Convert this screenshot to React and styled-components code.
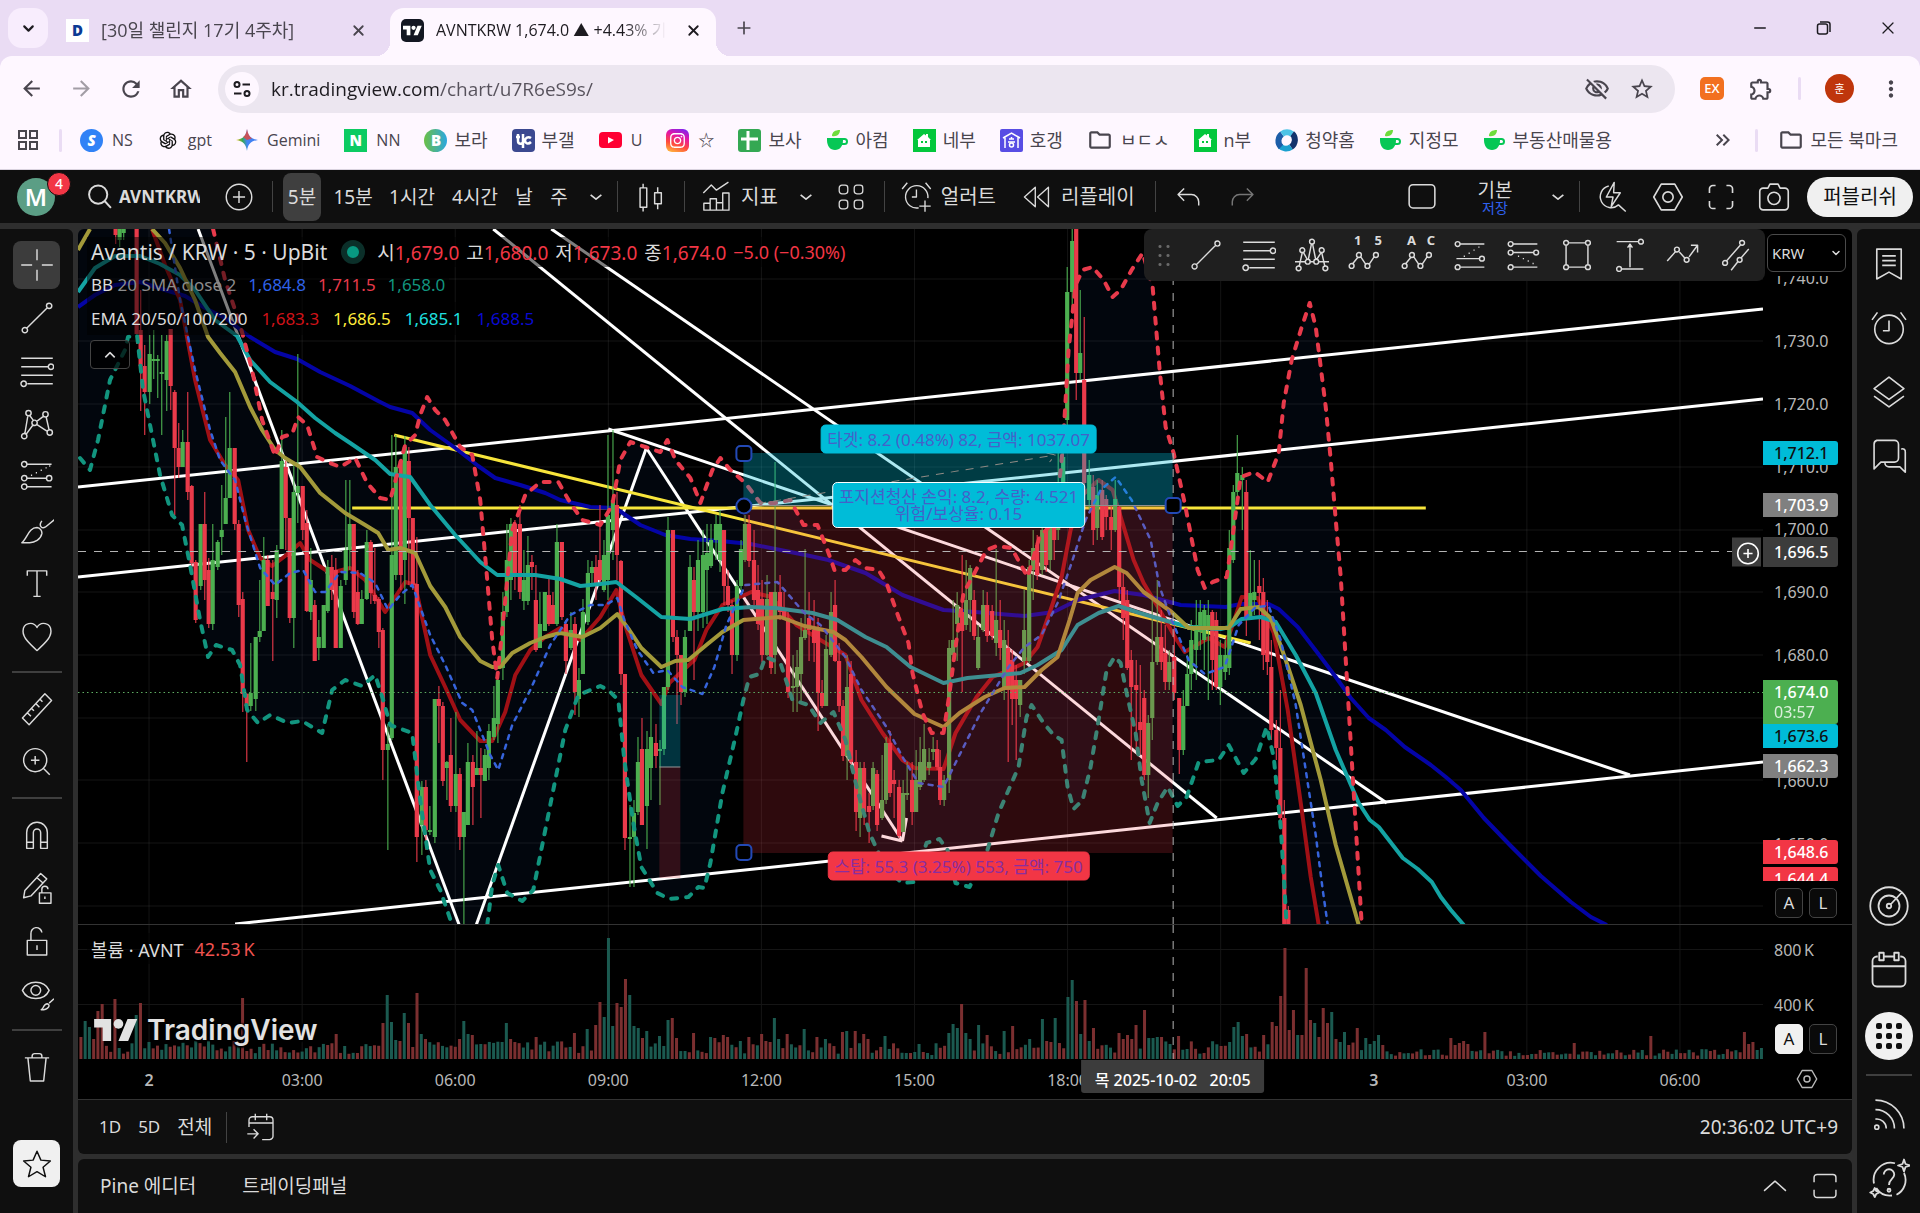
import React, { useState } from 'react';
import styled, { createGlobalStyle, css } from 'styled-components';
import {
  MdArrowBack,
  MdArrowForward,
  MdRefresh,
  MdOutlineHome,
  MdOutlineVisibilityOff,
  MdStarBorder,
  MdOutlineExtension,
  MdMoreVert,
  MdOutlineFolder,
  MdKeyboardDoubleArrowRight,
} from 'react-icons/md';
import { AiOutlineOpenAI } from 'react-icons/ai';
import { FaInstagram } from 'react-icons/fa';
import { ChevronDown, X, Plus, Minus } from 'lucide-react';

const GlobalStyle = createGlobalStyle`
  * { box-sizing: border-box; }
  body { margin: 0; background: #2e2e2e; }
  button, input, select { font: inherit; color: inherit; }
  button { border: 0; background: none; padding: 0; cursor: pointer; }
  a { color: inherit; text-decoration: none; }
`;

/* ---------- browser frame ---------- */

const Page = styled.div`
  min-height: 100vh;
  display: flex;
  flex-direction: column;
  font-family: 'Noto Sans', 'Noto Sans CJK KR', sans-serif;
`;

const BrowserFrame = styled.header`
  font-family: 'Open Sans', 'Noto Sans CJK KR', sans-serif;
  background: #eadcf4;
  color: #49454e;
`;

const TabStrip = styled.div`
  height: 56px;
  padding: 8px 20px 0 8px;
  display: flex;
`;

const TabSearch = styled.button`
  width: 40px;
  height: 40px;
  border-radius: 14px;
  background: #f8edfd;
  color: #1d1b20;
  display: grid;
  place-items: center;
`;

const Tab = styled.div`
  position: relative;
  width: ${(p) => (p.$active ? 326 : 342)}px;
  height: ${(p) => (p.$active ? 48 : 44)}px;
  padding: ${(p) => (p.$active ? '0 13px 4px 11px' : '0 23px 0 18px')};
  display: flex;
  align-items: center;
  gap: 12px;
  font-size: ${(p) => (p.$active ? 16 : 18)}px;
  line-height: 24px;
  border-radius: 14px 14px 0 0;
  ${(p) =>
    p.$active &&
    css`
      background: #fef7ff;
      color: #1d1b20;
      &::before,
      &::after {
        content: '';
        position: absolute;
        bottom: 0;
        width: 14px;
        height: 14px;
      }
      &::before {
        left: -14px;
        background: radial-gradient(circle at 0 0, transparent 14px, #fef7ff 14px);
      }
      &::after {
        right: -14px;
        background: radial-gradient(circle at 100% 0, transparent 14px, #fef7ff 14px);
      }
    `}
`;

const TabTitle = styled.span`
  flex: 1;
  overflow: hidden;
  white-space: nowrap;
  mask-image: linear-gradient(90deg, #000 80%, transparent 98%);
`;

const PlainButton = styled.button`
  display: grid;
  place-items: center;
  width: ${(p) => p.$w || 24}px;
  height: ${(p) => p.$h || 40}px;
`;

const WindowControls = styled.div`
  margin-left: auto;
  display: flex;
  gap: 40px;
  color: #1d1b20;
`;

const AddressRow = styled.div`
  height: 65px;
  padding: 0 20px 0 16px;
  display: flex;
  align-items: center;
  background: #fef7ff;
  border-radius: 12px 12px 0 0;
`;

const NavButtons = styled.div`
  display: flex;
  gap: 20px;
  margin-right: 22px;

  button:nth-child(2) {
    opacity: 0.5;
  }
`;

const Omnibox = styled.label`
  flex: 1;
  height: 48px;
  padding: 0 20px 0 7px;
  display: flex;
  align-items: center;
  gap: 12px;
  border-radius: 24px;
  background: #ece6f0;
`;

const SiteInfo = styled.span`
  width: 34px;
  height: 34px;
  border-radius: 50%;
  background: #fef7ff;
  display: grid;
  place-items: center;
`;

const UrlInput = styled.input`
  flex: 1;
  min-width: 0;
  border: 0;
  outline: 0;
  padding: 0;
  font-size: 19px;
  line-height: 28px;
  background: linear-gradient(90deg, #1d1b20 167px, #56515b 167px);
  background-clip: text;
  -webkit-text-fill-color: transparent;
`;

const BrowserActions = styled.div`
  display: flex;
  align-items: center;
  gap: 24px;
  margin-left: 25px;
`;

const ExBadge = styled.button`
  width: 24px;
  height: 23px;
  border-radius: 5px;
  background: #f2701f;
  color: #fff;
  font-size: 13px;
  font-weight: 600;
  line-height: 23px;
`;

const ProfileBadge = styled.button`
  width: 29px;
  height: 29px;
  border-radius: 50%;
  background: #bf360c;
  color: #fff;
  font-size: 11px;
  line-height: 29px;
`;

const SoftDivider = styled.i`
  width: 3px;
  height: 23px;
  border-radius: 2px;
  background: #eadcf4;
`;

const BookmarkBar = styled.nav`
  height: 49px;
  padding: 0 22px 10px 16px;
  display: flex;
  align-items: center;
  gap: 24px;
  background: #fef7ff;
  border-bottom: 1px solid #d9d2de;
  line-height: 24px;
  white-space: nowrap;
`;

const BookmarkLead = styled.div`
  display: flex;
  align-items: center;
  gap: 19px;
  margin-right: -6px;
`;

const Bookmark = styled.a`
  display: flex;
  align-items: center;
  gap: ${(p) => (p.$latin ? 9 : 7)}px;
  font-size: ${(p) => (p.$latin ? 16 : 18)}px;
`;

const BookmarkTail = styled.div`
  margin-left: auto;
  display: flex;
  align-items: center;
  gap: 20px;
`;

const Favicon = styled.span`
  width: 23px;
  height: 23px;
  display: grid;
  place-items: center;
  border-radius: ${(p) => p.$radius || 0};
  background: ${(p) => p.$bg || 'none'};
  color: ${(p) => p.$color || '#fff'};
  font-weight: 800;
  font-size: 15px;
  font-style: ${(p) => (p.$italic ? 'italic' : 'normal')};
  line-height: 23px;
`;

/* ---------- trading app ---------- */

const TopBar = styled.div`
  height: 53px;
  padding: 0 7px 0 17px;
  display: flex;
  align-items: center;
  background: #0f0f0f;
  color: #dbdbdb;
  font-size: 19px;
  line-height: 24px;
  white-space: nowrap;
`;

const Avatar = styled.button`
  position: relative;
  width: 38px;
  height: 38px;
  margin-right: 28px;
  border-radius: 50%;
  background: #5b9e85;
  color: #fff;
  font-size: 24px;
  font-weight: 600;
  line-height: 38px;
`;

const Notice = styled.span`
  position: absolute;
  top: -6px;
  right: -16px;
  width: 24px;
  height: 24px;
  border: 1px solid #0f0f0f;
  border-radius: 50%;
  background: #f23645;
  font-size: 14px;
  line-height: 22px;
  font-weight: 500;
`;

const SymbolButton = styled.button`
  display: flex;
  align-items: center;
  gap: 2px;
  width: 117px;
  margin-right: 22px;
  overflow: hidden;
  font-weight: 700;
  font-size: 17px;

  svg {
    flex-shrink: 0;
  }
`;

const IconButton = styled.button`
  width: 34px;
  height: 46px;
  display: grid;
  place-items: center;
  opacity: ${(p) => (p.$dim ? 0.5 : 1)};
`;

const LabelButton = styled.button`
  display: flex;
  align-items: center;
  gap: 8px;
  height: 46px;
  font-size: 20px;
`;

const BarDivider = styled.i`
  width: 1px;
  height: 31px;
  margin: 0 16px 0 ${(p) => (p.$wide ? 20 : 16)}px;
  background: #434343;
`;

const Intervals = styled.div`
  display: flex;
  align-items: center;
  gap: 9px;
  margin-left: -6px;
`;

const IntervalButton = styled.button`
  width: ${(p) => p.$w}px;
  height: 48px;
  border-radius: 8px;
  background: ${(p) => (p.$active ? '#3f3f3f' : 'none')};
`;

const Cluster = styled.div`
  display: flex;
  align-items: center;
  gap: ${(p) => p.$gap}px;
`;

const RightTools = styled(Cluster)`
  margin-left: auto;
`;

const LayoutName = styled.button`
  width: 52px;
  margin: 0 22px 0 31px;
  line-height: 22px;

  small {
    display: block;
    color: #2f62f0;
    font-size: 14px;
    line-height: 14px;
  }
`;

const PublishButton = styled.button`
  width: 106px;
  height: 40px;
  margin-left: 18px;
  border-radius: 20px;
  background: #f0f0f0;
  color: #0f0f0f;
  font-size: 20px;
`;

const Workspace = styled.div`
  flex: 1;
  display: grid;
  grid-template-columns: 73px minmax(0, 1fr) 63px;
  gap: 5px;
  padding-top: 6px;
`;

const SideBar = styled.aside`
  background: #0f0f0f;
  color: #dbdbdb;
  display: flex;
  flex-direction: column;
  align-items: center;
  padding: ${(p) => (p.$right ? '3px 0 2px' : '9px 0 26px')};
  border-radius: ${(p) => (p.$right ? '6px 0 0 0' : '0 6px 0 0')};
`;

const ToolButton = styled.button`
  width: 47px;
  height: ${(p) => p.$h || 53}px;
  display: grid;
  place-items: center;
`;

const ActiveTool = styled.span`
  width: 47px;
  height: 48px;
  display: grid;
  place-items: center;
  border-radius: 8px;
  background: #3c3c3c;
`;

const ToolDivider = styled.i`
  width: ${(p) => (p.$tight ? 46 : 50)}px;
  height: 2px;
  margin: ${(p) => (p.$tight ? '14px 0 7px' : '9px 0')};
  background: #3f3f3f;
`;

const FavoriteButton = styled.button`
  width: 47px;
  height: 47px;
  margin-top: auto;
  border-radius: 8px;
  background: #f0f0f0;
  color: #0f0f0f;
  display: grid;
  place-items: center;
`;

const AppsButton = styled.button`
  width: 48px;
  height: 48px;
  margin-top: 10px;
  border-radius: 50%;
  background: #f0f0f0;
  color: #0f0f0f;
  display: grid;
  place-items: center;
`;

const Spacer = styled.span`
  flex: 1;
`;

const Center = styled.main`
  display: flex;
  flex-direction: column;
  color: #dbdbdb;
`;

const ChartCard = styled.section`
  flex: 1;
  display: flex;
  flex-direction: column;
  background: #000;
  border-radius: 6px 6px 0 0;
  overflow: hidden;
`;

const Pane = styled.div`
  flex: ${(p) => (p.$fixed ? `0 0 ${p.$fixed}px` : '1')};
  display: grid;
  grid-template-columns: minmax(0, 1fr) 89px;
  ${(p) => p.$line && 'border-top: 1px solid #333;'}
`;

const Plot = styled.div`
  position: relative;
  min-height: 0;
`;

const PlotSvg = styled.svg`
  position: absolute;
  inset: 0;
  width: 100%;
  height: 100%;
`;

const Legend = styled.div`
  position: absolute;
  top: 8px;
  left: 9px;
  display: flex;
  flex-direction: column;
  align-items: flex-start;
  font-size: ${(p) => (p.$large ? 18 : 17)}px;
  white-space: nowrap;
`;

const LegendRow = styled.div`
  height: ${(p) => p.$h}px;
  padding: 0 4px;
  display: flex;
  align-items: center;
  gap: ${(p) => p.$gap || 12}px;
  background: rgba(0, 0, 0, 0.5);
`;

const SymbolTitle = styled.h1`
  margin: 0;
  font-size: 21px;
  font-weight: 400;
`;

const MarketDot = styled.i`
  width: 24px;
  height: 24px;
  margin: 0 5px 0 7px;
  border: 6px solid #0b2f29;
  border-radius: 50%;
  background: #089981;
`;

const Ohlc = styled.span`
  font-size: ${(p) => (p.$change ? 18 : 19)}px;
`;

const Value = styled.span`
  color: ${(p) => p.$c};
`;

const CollapseButton = styled.button`
  width: 40px;
  height: 29px;
  margin: 5px 0 0 3px;
  border: 1px solid #434343;
  border-radius: 4px;
  background: rgba(0, 0, 0, 0.7);
  display: grid;
  place-items: center;
`;

const FloatingTools = styled.div`
  position: absolute;
  top: 0;
  right: -2px;
  height: 52px;
  padding: 0 12px;
  display: flex;
  align-items: center;
  gap: 19px;
  background: #1f1f1f;
  border-radius: 8px;
`;

const Grip = styled.i`
  width: 14px;
  height: 26px;
  background: radial-gradient(circle, #6a6a6a 1px, transparent 2px) 0 0 / 8px 9px;
`;

const PositionTag = styled.div`
  position: absolute;
  transform: translate(-50%, -50%);
  padding: 5px 6px;
  border: 1px solid ${(p) => p.$border || p.$bg};
  border-radius: 5px;
  background: ${(p) => p.$bg};
  color: ${(p) => p.$c};
  font-size: 17px;
  line-height: 17px;
  text-align: center;
  white-space: nowrap;
`;

const Watermark = styled.div`
  position: absolute;
  left: 16px;
  bottom: 12px;
  display: flex;
  align-items: center;
  gap: 9px;
  color: #e2e2e2;
  font-family: Inter, sans-serif;
  font-size: 28px;
  font-weight: 600;
  line-height: 32px;
  text-shadow: 0 0 2px #000, 2px 0 2px #000, -2px 0 2px #000, 0 2px 2px #000;
`;

const Axis = styled.div`
  display: flex;
  flex-direction: column;
  font-size: 16px;
  color: #b8b8b8;
`;

const CurrencySelect = styled.select`
  width: 79px;
  height: 38px;
  margin: 5px 0 4px 4px;
  padding: 0 4px;
  border: 1px solid #4a4a4a;
  border-radius: 6px;
  background: #000;
  color: #dbdbdb;
  font-size: 15px;
  appearance: none;
`;

const SelectBox = styled.div`
  position: relative;

  svg {
    position: absolute;
    right: 10px;
    top: 18px;
    pointer-events: none;
  }
`;

const Ticks = styled.div`
  position: relative;
  flex: 1;
  overflow: hidden;
`;

const Tick = styled.span`
  position: absolute;
  left: 11px;
  line-height: 20px;
  transform: translateY(-50%);
`;

const PriceTag = styled.div`
  position: absolute;
  left: 0;
  width: 75px;
  padding: ${(p) => p.$pad || 2}px 0 ${(p) => p.$pad || 2}px 11px;
  border-radius: 0 3px 3px 0;
  background: ${(p) => p.$bg};
  color: ${(p) => p.$c || '#fff'};
  font-weight: 500;
  line-height: 20px;
  transform: translateY(-50%);

  small {
    display: block;
    font-size: 16px;
    font-weight: 400;
    opacity: 0.8;
  }
`;

const AddAtPrice = styled.button`
  position: absolute;
  right: 2px;
  width: 29px;
  height: 29px;
  background: #3c3c3c;
  color: #fff;
  display: grid;
  place-items: center;
  transform: translateY(-50%);
`;

const ScaleButtons = styled.div`
  height: ${(p) => p.$h}px;
  padding: 7px 0 0 12px;
  display: flex;
  gap: 6px;
`;

const ScaleButton = styled.button`
  width: 28px;
  height: 30px;
  border: 1px solid ${(p) => (p.$on ? '#f0f0f0' : '#434343')};
  border-radius: 5px;
  background: ${(p) => (p.$on ? '#f0f0f0' : '#0a0a0a')};
  color: ${(p) => (p.$on ? '#0f0f0f' : '#dbdbdb')};
  font-size: 17px;
  line-height: 20px;
`;

const TimeAxis = styled.div`
  height: 41px;
  display: grid;
  grid-template-columns: minmax(0, 1fr) 89px;
  font-size: 16px;
  color: #b8b8b8;
  border-bottom: 1px solid #333;
`;

const TimeScale = styled.div`
  position: relative;
`;

const TimeLabel = styled.span`
  position: absolute;
  top: 10px;
  line-height: 22px;
  transform: translateX(-50%);
  font-weight: ${(p) => (p.$bold ? 600 : 400)};
`;

const TimeTag = styled.div`
  position: absolute;
  top: 1px;
  height: 33px;
  padding: 0 14px;
  border-radius: 0 0 3px 3px;
  background: #3c3c3c;
  color: #fff;
  font-weight: 500;
  line-height: 40px;
  white-space: pre;
  transform: translateX(-50%);
`;

const AxisSettings = styled.button`
  width: 34px;
  height: 40px;
  margin-left: 27px;
  display: grid;
  place-items: center;
`;

const RangeBar = styled.div`
  height: 54px;
  padding: 0 14px 0 21px;
  display: flex;
  align-items: center;
  gap: 17px;
  background: #0f0f0f;
  border-radius: 0 0 6px 6px;
  font-size: 17px;
  line-height: 24px;
`;

const RangeButton = styled.button`
  font-size: ${(p) => (p.$all ? 19 : 17)}px;
`;

const RangeDivider = styled.i`
  width: 1px;
  height: 31px;
  margin-left: -3px;
  background: #434343;
`;

const Clock = styled.button`
  margin-left: auto;
  font-size: 19px;
`;

const PanelTabs = styled.div`
  height: 54px;
  margin-top: 5px;
  padding: 0 10px 0 22px;
  display: flex;
  align-items: center;
  gap: 46px;
  background: #0f0f0f;
  border-radius: 6px 6px 0 0;
  font-size: 19px;
  line-height: 24px;
`;

/* ---------- icons ---------- */

const ring = (x, y, r) => `M${x - r} ${y}a${r} ${r} 0 1 0 ${2 * r} 0a${r} ${r} 0 1 0 ${-2 * r} 0`;

const ICONS = {
  search: `${ring(12.5, 12, 7.5)}M18 17.5l5 5.5`,
  plusCircle: `${ring(14, 14, 10.5)}M14 9v10M9 14h10`,
  plusSmall: `${ring(14, 14, 9)}M14 10v8M10 14h8`,
  caret: 'M9 12l5 4 5-4',
  caretUp: 'M8 17l6-6 6 6',
  bigUp: 'M5 18l9-8 9 8',
  candles: 'M5 6.5h5.5v16H5zM7.5 6.5V3M7.5 26v-3.5M17 10.5h5.5v9H17zM19.5 10.5V6M19.5 24v-4.5',
  indicators: 'M2 10.5l7-7 4.5 4.5 10.5-7M2.5 25.5v-6h5.5v6M8 25.5v-10h5.5v10M13.5 19h5.5v6.5M19 25.5v-15h5.5v15M2 25.5h23',
  layoutGrid:
    'M5.5 3h3A2.5 2.5 0 0111 5.5v3A2.5 2.5 0 018.5 11h-3A2.5 2.5 0 013 8.5v-3A2.5 2.5 0 015.5 3zM19.5 3h3A2.5 2.5 0 0125 5.5v3a2.5 2.5 0 01-2.5 2.5h-3A2.5 2.5 0 0117 8.5v-3A2.5 2.5 0 0119.5 3zM5.5 17h3a2.5 2.5 0 012.5 2.5v3A2.5 2.5 0 018.5 25h-3A2.5 2.5 0 013 22.5v-3A2.5 2.5 0 015.5 17zM19.5 17h3a2.5 2.5 0 012.5 2.5v3a2.5 2.5 0 01-2.5 2.5h-3a2.5 2.5 0 01-2.5-2.5v-3a2.5 2.5 0 012.5-2.5z',
  alert: 'M15.5 23.5A9.8 9.8 0 1123.5 15M13.5 7.5V14H9.5M1 7l4.5-5.5M21.5 1.5L26 7M21 17v10M16 22h10',
  replay: 'M12.5 5.5v17L3 14zM24 5.5v17L14.5 14z',
  undo: 'M10 7l-5 5 5 5M5.5 12H16a6 6 0 016 6v3',
  redo: 'M18 7l5 5-5 5M22.5 12H12a6 6 0 00-6 6v3',
  square: 'M7 4.5h14a3 3 0 013 3v12a3 3 0 01-3 3H7a3 3 0 01-3-3v-12a3 3 0 013-3z',
  quick: 'M15 2L8.5 14H14l-1.5 8L20 10.5h-5.5zM10.5 5a9 9 0 108 15.5l6 5.5',
  hexGear: `M9 4.5h10l5.5 9.5-5.5 9.5H9L3.5 14z${ring(14, 14, 3.8)}`,
  smallHex: `M10 7h8l4 7-4 7h-8l-4-7z${ring(14, 14, 2.5)}`,
  fullscreen: 'M10 5.5H8A2.5 2.5 0 005.5 8v3M18 5.5h2A2.5 2.5 0 0122.5 8v3M10 22.5H8A2.5 2.5 0 015.5 20v-3M18 22.5h2a2.5 2.5 0 002.5-2.5v-3',
  camera: `M6 7.5h3.5l1.5-3h6l1.5 3H22a2.5 2.5 0 012.5 2.5v11a2.5 2.5 0 01-2.5 2.5H6A2.5 2.5 0 013.5 21V10A2.5 2.5 0 016 7.5z${ring(14, 15, 4.5)}`,
  cross: 'M14 1v9M14 18v9M1 14h9M18 14h9',
  trend: `${ring(4, 24, 2.2)}${ring(24, 4, 2.2)}M5.5 22.5l17-17`,
  fib: `M1 3.5h26M1 10.5h22M1 17.5h26M6 24.5h21${ring(25.5, 10.5, 2.2)}${ring(3, 24.5, 2.2)}`,
  xabcd: `${ring(7, 5, 2.2)}${ring(21, 6, 2.2)}${ring(3.5, 24, 2.2)}${ring(24.5, 21, 2.2)}${ring(12, 13, 2.2)}M6.5 7L4 22M8 7l3 4M10.5 15L5 22.5M13.5 12l6-4.5M14 14.5l8.5 5.5M21.5 8L24 19`,
  forecast: `${ring(3.5, 3.5, 2.2)}${ring(3.5, 15, 2.2)}${ring(24, 15, 2.2)}${ring(3.5, 22, 2.2)}M6 3.5h20M6 15h16M6 22h20M9 12.5h1M13 10.5h1M17 8.5h1M21 6.5h1M24 5h1`,
  brush: 'M1.5 24.5C6 21 7 12 14 12a4.5 4.5 0 014 5c-1 5-6 7.5-10 7.5zM29 5l-8 6.5c-3 2-6-1-3-5',
  text: 'M6 8V4h16v4M14 4v21M11 25h6',
  heart: 'M14 26C8 20.5 2.5 15.5 2.5 10c0-7 8.5-8.5 11.5-3C17 1.5 25.5 3 25.5 10c0 5.5-5.5 10.5-11.5 16z',
  ruler: 'M2 21.5L20.5 1.5l5.5 5.5L7.5 27zM6 17l3 3M9.5 13.5l2 2M13 9.5l3 3M16.5 6l2 2',
  zoom: `${ring(12.5, 12.5, 9.5)}M12.5 9v7M9 12.5h7M19 19l5.5 5.5`,
  magnet: 'M5.5 25V12a8.5 8.5 0 0117 0v13h-5.5V12a3 3 0 00-6 0v13zM5.5 20H11M17 20h5.5',
  lockDraw: 'M3 22l1-6L17 2l5 4.5L9 20.5zM16 18h9.5v8.5H16zM18 18v-3a2.5 2.5 0 015 0M20.5 21v2M14 5.5l4.5 4',
  lock: 'M6 13.5h16v12H6zM9 13.5V8a4.5 4.5 0 019-1M14 17.5v4',
  eye: `M2 11c4-9 18-9 22 0-4 9-18 9-22 0z${ring(13, 11, 4)}M17.5 27c2.5-1 1.5-5 5-5 3 1 1 5-5 5zM28 18l-4 3.5`,
  trash: 'M4 6.5h20M6.5 6.5L8.5 25.5h11l2-19M10 6.5V5a2 2 0 012-2h4a2 2 0 012 2v1.5',
  star: 'M14 3.5l3.2 7.3 7.8.7-6 5.2 2 7.8-7-4.2-7 4.2 2-7.8-6-5.2 7.8-.7z',
  watchlist: 'M5 3h18v22l-9-5-9 5zM9 8h10M9 11.5h10M9 15h10',
  clock: `${ring(14, 15, 10.5)}M14 8.5V16H9.5M1.5 8l4-5.5M22.5 2.5l4 5.5`,
  layers: 'M14 3l11 8.5-11 8-11-8zM3 17l11 8 11-8',
  chat: 'M5 2.5h13a3 3 0 013 3v10a3 3 0 01-3 3H8l-5 5v-18a3 3 0 012-3zM23 9a2 2 0 013 2v15l-4-4h-8a3 3 0 01-3-3',
  target: `${ring(14, 14, 12.5)}${ring(14, 14, 7)}${ring(14, 14, 1.5)}M15 13l7.5-8`,
  calendar: 'M6.5 5H6a3 3 0 00-3 3v14a3 3 0 003 3h16a3 3 0 003-3V8a3 3 0 00-3-3h-.5M10.5 5h7M3 11.5h22M7.5 2.5h3v5h-3zM17.5 2.5h3v5h-3z',
  rss: `M4 3a21 21 0 0121 21M4 10a14 14 0 0114 14M4 17a7 7 0 018 7${ring(5, 23, 1.5)}`,
  help: `M24 10A11 11 0 0119 24.5M16 25A11 11 0 015.5 20M4 17A11.5 11.5 0 0118 3.5M10.5 11a3.5 3.5 0 117 0c0 3-3.5 3-3.5 7${ring(14, 21.5, 1)}M24 1l1 3 3 1-3 1-1 3-1-3-3-1 3-1zM4.5 20l1 2 2 1-2 1-1 2-1-2-2-1 2-1z`,
  goto: 'M3.5 14V8a3 3 0 013-3h15a3 3 0 013 3v14a3 3 0 01-3 3H15M3.5 10.5h21M9 2.5V8M19 2.5V8M2 20h9.5M7.5 16l4 4-4 4',
  expand: 'M5 11V7a2.5 2.5 0 012.5-2.5h13A2.5 2.5 0 0123 7v4M5 17v4a2.5 2.5 0 002.5 2.5h13A2.5 2.5 0 0023 21v-4',
  pattern: `${ring(3, 25, 2)}${ring(25, 25, 2)}${ring(6, 10, 2)}${ring(14, 3, 2)}${ring(22, 10, 2)}${ring(10.5, 19.5, 2)}${ring(17.5, 19.5, 2)}M0 19.5h8.5M12.5 19.5h3M19.5 19.5H28M3.5 23L6 12M7 12l3 5.5M11 17.5L13.5 5M14.5 5L17 17.5M18 17.5l3.5-5.5M22 12l2.5 11`,
  wave: `${ring(3, 23, 2)}${ring(9, 14, 2)}${ring(16, 23, 2)}${ring(23, 14, 2)}M4 21l4-5M10.5 15.5l4 6M17.5 21.5l4-6`,
  longPos: `${ring(3, 5, 2)}${ring(23, 17, 2)}${ring(3, 24, 2)}M5 5h20M2 17h19M5 24h20M8 15h1M12 12.5h1M16 10h1M20 7.5h1`,
  shortPos: `${ring(3, 5, 2)}${ring(3, 12, 2)}${ring(24, 12, 2)}${ring(3, 24, 2)}M5 5h20M5 12h17M5 24h20M9 15h1M13 17h1M17 19h1M21 21h1`,
  rect: `${ring(5, 4, 2)}${ring(23, 4, 2)}${ring(5, 24, 2)}${ring(23, 24, 2)}M7 4h14M7 24h14M5 6v16M23 6v16`,
  range: `M3 3h18${ring(23, 3, 2)}M7 25.5h18${ring(5, 25.5, 2)}M14 24V6M12 8l2-3 2 3`,
  zigzag: `M1 19l7-8M11 11.5l5 5.5M19 15.5l7-9.5M20.5 6H26v6${ring(9, 9.5, 2)}${ring(17, 18, 2)}`,
  channel: `${ring(5, 20.5, 2)}${ring(19, 4, 2)}${ring(17, 18, 2)}M6.5 18.5L17.5 6M10 26.5l5.5-7M18.5 16l6-7`,
};

const Stroke = styled.svg`
  display: block;
  fill: none;
  stroke: currentColor;
  stroke-width: ${(p) => p.$sw || 1.2};
  stroke-linejoin: round;
`;

const Icon = ({ name, size = 34, sw }) => (
  <Stroke width={size} height={size} viewBox="0 0 28 28" $sw={sw} aria-hidden="true">
    <path d={ICONS[name]} />
  </Stroke>
);

const WaveLabel = styled.span`
  position: relative;
  display: block;

  b {
    position: absolute;
    top: -6px;
    left: 6px;
    width: 28px;
    display: flex;
    justify-content: space-between;
    font-size: 13px;
    line-height: 16px;
  }
`;

const Wave = ({ from, to }) => (
  <WaveLabel>
    <b>
      <span>{from}</span>
      <span>{to}</span>
    </b>
    <Icon name="wave" />
  </WaveLabel>
);

const TvMark = ({ width = 44, height = 34 }) => (
  <svg width={width} height={height} viewBox="0 0 36 28" fill="currentColor" aria-hidden="true">
    <path d="M14 23H7V12H0V5h14v18zM28 23h-8l7.5-18h8L28 23z" />
    <circle cx="20" cy="9" r="4" />
  </svg>
);

const Cup = () => (
  <svg width="23" height="23" viewBox="0 0 23 23" aria-hidden="true">
    <path d="M1 9h16v2c0 6-3 10-8 10S1 17 1 11z" fill="#06c755" />
    <path d="M17 10h1.5a2.5 2.5 0 010 5H16" fill="none" stroke="#06c755" strokeWidth="2" />
    <path d="M6 7c0-4 3-6 8-6 0 4-3 7-8 6z" fill="#6fdc3c" />
  </svg>
);

const House = () => (
  <svg width="17" height="17" viewBox="0 0 17 17" aria-hidden="true">
    <path d="M1 8l7-6 2 1.5V2h2v3l3 3h-1v7H2V8z" fill="#fff" />
    <path d="M5 9h2v2H5zM9 9h2v2H9z" fill="#03c73c" />
  </svg>
);

/* ---------- market data ---------- */

// x + direction, then high, body top, body bottom and low on the plot grid
const CANDLES = `115r 229 229 235 244|119g 229 229 240 247|123g 229 229 233 240|136r 229 229 334 344|140r 290 330 366 411|144r 345 366 392 435
149g 335 354 392 404|153g 330 359 361 379|157g 355 359 361 398|161g 335 372 373 435|166g 335 341 380 411|170r 329 329 386 410|174r 390 392 448 515
178r 423 448 467 478|182g 430 442 467 467|187r 392 442 492 500|191r 485 486 563 575|195r 560 562 620 623|200g 524 524 586 590|204r 492 524 580 600
208r 558 570 624 628|212g 524 560 624 630|217g 540 542 567 570|221g 485 530 537 555|225g 417 498 524 524|229g 392 448 498 498|234r 448 448 524 530
238r 520 524 605 617|242r 592 599 694 712|246r 693 694 706 762|250g 643 693 706 711|255g 637 637 699 711|259g 580 631 637 642|263g 537 560 631 631
267r 555 560 606 606|272r 560 592 599 661|276g 545 550 600 618|281g 430 461 549 549|285r 461 467 518 550|289r 518 518 618 623|293g 465 492 618 648
297g 354 486 493 523|302r 486 486 530 540|306r 510 523 611 612|310g 548 580 612 620|314r 600 605 661 661|318g 620 637 648 660|323g 605 605 648 648
327g 560 567 611 613|331r 555 567 590 600|335r 558 570 648 648|340g 580 586 648 648|345g 480 550 580 585|349g 480 524 550 570|353r 524 524 612 618
357r 570 592 624 625|361g 590 599 624 624|366g 530 542 599 600|370r 540 542 593 604|374r 548 595 601 604|378r 597 599 632 648|382r 628 630 750 780
387g 724 744 750 850|391g 435 555 738 740|395g 435 467 575 580|400r 460 461 575 590|404g 436 447 560 604|408r 447 461 518 585|412r 518 518 585 590
416r 537 584 837 862|421g 781 787 825 855|425r 780 787 830 850|429g 806 830 832 835|434g 699 699 837 843|438r 686 699 706 743|442r 702 706 781 786
446g 761 762 768 800|450r 718 755 806 812|455g 712 774 806 812|459r 768 774 837 850|463g 812 812 837 924|467g 743 762 825 825|472r 755 762 787 825
476g 731 768 775 775|480r 748 768 775 818|484g 749 755 781 781|488g 724 731 768 780|493g 686 718 737 740|497g 673 680 724 743|502g 592 612 668 680
506g 524 560 612 617|510g 518 524 580 600|514r 520 524 575 590|519r 505 524 592 599|523g 550 580 601 610|527g 536 565 601 605|531r 555 562 567 590
535r 565 600 650 652|539g 592 624 648 648|544g 592 592 631 631|548r 576 595 624 626|552r 592 605 624 624|556g 524 542 624 626|561r 542 542 617 620
565r 620 624 661 674|570g 612 630 648 650|574r 617 624 692 715|578g 668 680 699 717|582g 599 612 674 674|587g 560 573 622 625|591g 561 567 573 583
595r 555 567 586 600|599r 505 560 580 585|603g 540 555 590 592|607g 435 515 580 600|612g 430 500 530 560|616r 492 505 555 580|620r 560 561 674 685
624r 674 674 838 850|629g 805 837 838 887|633g 800 813 837 887|637g 737 762 812 815|641r 718 749 825 825|646g 731 749 806 849|650g 692 737 768 800
655r 724 743 756 768|659g 740 749 750 805|663g 687 687 749 755|667g 517 530 687 690|672r 530 530 637 642|676r 630 637 655 724|680r 655 655 692 705
684g 630 637 692 697|689g 555 567 631 631|693r 567 580 612 680|697g 540 560 612 631|702g 530 555 612 628|706g 524 553 570 624|710g 524 540 566 568
715g 515 524 540 560|719g 510 524 560 572|723r 530 530 586 605|727r 570 586 605 612|731r 600 605 655 674|736g 580 586 655 661|740g 540 549 586 590
744g 515 524 560 562|748r 515 524 561 567|753r 530 560 600 605|757r 565 590 624 630|761r 580 599 655 662|766g 575 599 655 656|770r 592 592 668 674
774g 462 592 655 674|779r 575 592 612 620|783r 592 610 618 620|787r 612 618 692 698|792g 655 686 687 712|796g 650 667 687 712|800g 618 637 674 702
804g 549 630 638 640|808r 592 618 630 661|813r 600 630 643 662|817r 618 630 693 731|821r 680 693 706 708|825g 635 649 706 706|830g 592 612 655 657
834r 580 605 661 662|838r 643 661 706 712|842r 700 706 756 761|846g 655 687 756 780|850r 661 674 762 764|855r 750 762 812 831|859g 762 768 818 837
863r 762 768 812 825|868r 793 806 812 843|872g 762 768 806 810|876r 770 774 825 831|881g 755 800 818 820|885g 737 743 800 804|889r 731 743 793 797
893r 770 780 784 818|898r 780 787 836 838|902g 780 793 832 832|906g 762 793 795 800|911r 762 780 812 825|915g 750 780 812 812|919g 737 762 787 790
923g 724 749 780 782|928g 748 762 768 775|932g 737 749 752 760|936r 740 749 767 770|939r 750 767 800 805|943g 775 780 800 806|948g 640 648 780 793
952g 600 640 655 660|956g 592 605 624 661|961r 555 612 631 692|965g 560 600 625 630|969g 565 568 600 632|973r 590 600 636 640|977g 625 637 668 670
982g 590 605 630 632|986r 592 605 636 642|991r 605 611 636 640|995g 549 620 643 656|999r 600 630 648 660|1003g 620 640 690 700|1007r 630 648 690 762
1011r 650 660 699 725|1015r 665 680 699 760|1019g 680 680 705 717|1023g 590 630 661 674|1028g 560 567 661 663|1032g 530 548 570 600|1036r 535 545 575 580
1041g 510 530 570 575|1045r 500 530 565 572|1049g 515 525 560 570|1053r 505 522 540 560|1057g 453 510 530 540|1062g 440 457 507 510|1066g 267 292 420 425
1071g 229 241 292 310|1075r 229 229 373 400|1079g 290 353 373 380|1083r 317 380 483 500|1088g 460 475 500 510|1092r 475 487 530 545|1096g 480 495 528 540
1101r 480 490 537 540|1105r 495 499 517 530|1110r 505 517 530 550|1114g 480 499 530 532|1118r 505 507 587 600|1122r 570 587 618 640|1126r 590 600 668 670
1130r 650 660 687 760|1135r 660 685 690 750|1139r 665 722 730 755|1143r 690 698 775 780|1147g 715 723 775 798|1151g 600 662 718 740|1156g 580 637 662 665
1160r 610 637 662 670|1164r 625 653 682 690|1168g 650 662 682 690|1173r 620 657 693 700|1178r 698 698 750 774|1182g 690 706 750 755|1186g 655 674 706 706
1190g 620 640 674 690|1195g 600 625 650 680|1199g 600 612 632 650|1203g 605 610 640 670|1207g 600 615 630 700|1211r 610 612 660 690|1215r 612 620 687 690
1219g 640 655 687 705|1224g 640 655 672 680|1228g 530 548 668 675|1232g 485 492 560 563|1236g 435 473 492 500|1241g 467 475 480 530|1245r 480 492 618 636
1249g 550 593 618 620|1253g 560 592 600 615|1258r 560 586 593 640|1262r 578 592 655 670|1266r 600 618 662 675|1270r 640 667 730 740|1275r 720 730 748 760
1279r 690 748 818 825|1283r 800 818 924 924|1287r 906 910 924 924`
  .split(/[|\n]/)
  .map((row) => {
    const [head, ...ys] = row.split(' ');
    const [high, top, bottom, low] = ys.map(Number);
    return { x: parseInt(head, 10), up: head.endsWith('g'), high, top, bottom, low };
  });

const EMA = {
  20: '152,229 165,265 180,300 195,380 210,440 225,465 238,480 248,530 260,558 272,566 285,556 300,543 310,560 330,573 350,568 365,580 385,612 405,582 415,585 430,655 445,687 460,720 480,741 492,741 505,712 515,675 530,650 545,637 560,628 580,640 600,617 616,590 624,623 641,675 661,704 669,683 694,660 706,630 722,605 751,592 771,597 796,625 820,640 845,655 861,700 882,733 902,760 914,768 943,769 955,733 976,697 992,677 1008,670 1024,663 1037,647 1049,613 1061,577 1070,530 1082,495 1098,480 1112,490 1133,560 1143,583 1159,610 1176,640 1184,652 1208,638 1224,647 1233,622 1241,597 1257,598 1273,633 1287,710 1301,810 1310,877 1318,925',
  50: '152,229 165,243 180,268 195,300 208,337 220,353 235,372 250,407 262,430 275,450 285,458 300,467 320,493 345,513 365,525 378,533 388,550 400,548 415,553 430,586 445,607 460,637 480,661 492,667 500,667 512,653 530,643 545,637 560,633 582,637 600,628 617,614 629,630 641,648 661,667 675,661 688,660 706,645 722,632 743,620 780,617 804,626 833,632 845,640 861,657 886,687 914,714 943,727 959,713 984,697 1004,688 1024,687 1041,670 1057,657 1069,620 1077,593 1090,580 1114,567 1126,573 1143,592 1171,612 1188,628 1212,628 1228,628 1240,609 1258,607 1270,618 1285,660 1300,705 1320,780 1335,845 1358,925',
  100: '78,292 95,268 115,256 140,256 160,264 180,275 195,290 215,320 237,336 250,360 270,382 297,402 315,418 335,433 350,443 375,460 390,474 410,477 430,505 455,535 480,562 497,575 535,575 560,579 580,586 600,584 616,582 637,598 661,617 690,619 722,609 751,607 775,608 812,613 837,620 865,637 886,647 910,667 943,683 967,678 1020,673 1037,665 1061,650 1077,625 1098,613 1118,606 1139,613 1163,620 1188,627 1220,629 1229,627 1241,619 1260,617 1275,622 1295,655 1315,693 1335,750 1358,803 1369,820 1378,827 1402,858 1417,869 1431,882 1440,897 1450,910 1463,925',
  200: '78,307 95,295 115,285 140,282 165,290 185,296 205,308 225,318 250,337 275,352 297,359 320,372 350,386 378,401 390,407 412,413 430,430 455,448 478,466 495,478 520,485 545,493 560,500 590,507 615,508 640,525 665,535 690,539 720,541 750,544 780,550 805,555 828,560 865,573 902,595 943,610 975,612 1024,616 1053,612 1077,600 1114,591 1143,595 1180,605 1225,607 1240,604 1268,604 1278,609 1297,627 1320,657 1335,677 1350,698 1368,718 1385,730 1404,747 1430,765 1445,777 1460,790 1483,818 1510,846 1540,876 1570,902 1590,917 1606,925',
};

const BB_BASIS =
  '169,229 180,300 195,370 210,430 220,460 235,480 245,520 260,568 275,585 290,573 303,570 315,592 325,592 340,572 360,573 375,583 388,610 400,595 412,585 430,635 445,665 462,703 472,710 490,755 498,770 512,725 530,690 550,645 570,615 590,605 605,605 617,598 624,620 637,650 653,673 667,670 682,687 702,694 714,667 726,625 745,585 777,582 804,613 820,625 845,657 861,690 886,727 902,757 918,783 943,787 955,763 980,713 1008,667 1024,647 1041,635 1057,603 1071,563 1085,520 1100,490 1115,477 1131,500 1150,540 1159,587 1171,620 1188,660 1204,674 1224,667 1238,625 1255,607 1268,606 1280,640 1295,705 1305,770 1315,835 1322,890 1327,925';
const BB_UPPER =
  '213,229 225,280 240,325 252,370 262,420 275,456 282,437 292,434 298,417 307,425 317,457 330,463 340,467 355,458 367,483 380,498 390,500 405,445 415,435 420,415 427,397 435,410 445,420 460,447 472,455 480,500 487,580 492,640 497,678 501,640 505,600 512,530 525,495 540,482 558,482 570,503 582,520 600,525 612,505 620,460 630,442 645,447 660,452 667,440 675,460 690,478 700,503 712,470 720,458 730,470 745,483 760,503 775,503 790,500 803,525 817,525 827,550 834,570 845,570 855,560 865,568 878,570 886,583 898,617 908,643 912,673 922,713 931,733 943,733 949,693 955,647 963,593 974,573 986,550 996,546 1011,548 1027,577 1039,537 1055,520 1062,450 1068,350 1075,285 1082,270 1092,267 1103,280 1112,297 1120,290 1131,270 1142,253 1152,287 1159,370 1165,427 1173,453 1184,503 1197,570 1204,588 1212,582 1226,577 1231,543 1240,477 1254,472 1267,482 1278,453 1283,403 1291,360 1301,327 1309,303 1315,327 1325,407 1330,460 1335,520 1340,577 1347,693 1354,810 1361,925';
const BB_LOWER_START =
  '80,458 90,470 98,440 110,380 125,350 128,337 137,335 143,390 160,475 172,515 182,525 190,565 200,620 208,657 216,645 232,650 240,665 247,710 258,723 270,715 288,723 302,721 322,733 332,690 345,680 362,686 375,675 383,700 390,725 412,733 420,800 430,870 440,890 452,925';
const BB_LOWER_REST =
  '487,925 492,885 498,865 507,893 522,901 533,890 545,830 555,780 565,730 578,695 600,686 608,690 618,700 624,760 633,823 641,867 657,893 669,899 688,897 698,887 704,888 710,863 722,793 735,737 743,700 749,677 759,674 765,657 780,663 792,700 808,705 820,723 833,712 845,740 857,790 869,833 886,870 902,883 914,882 926,843 939,839 947,850 955,883 969,887 986,853 998,813 1008,790 1018,767 1026,717 1031,705 1043,723 1053,735 1061,740 1067,787 1073,809 1082,800 1090,767 1098,720 1106,670 1114,657 1120,663 1126,693 1135,733 1141,780 1149,823 1157,803 1167,787 1177,806 1186,797 1198,762 1218,760 1228,745 1243,773 1255,759 1266,727 1273,757 1280,827 1286,925';

const BB_FILL = `78,229 ${BB_UPPER} ${`${BB_LOWER_START} ${BB_LOWER_REST}`.split(' ').reverse().join(' ')}`;

// x, height and direction of the taller bars; the quiet ones are filled in between
const VOLUME_PEAKS = [
  [80, 22, 0], [84, 38, 1], [89, 32, 1], [93, 20, 0], [97, 48, 0], [102, 55, 0], [115, 60, 0], [136, 44, 1], [140, 56, 0],
  [242, 61, 0], [335, 25, 0], [344, 13, 1], [382, 36, 0], [386, 64, 1], [391, 37, 1], [395, 19, 1], [399, 18, 0], [403, 46, 1],
  [408, 36, 0], [412, 12, 0], [416, 66, 0], [421, 25, 1], [425, 20, 0], [459, 20, 0], [463, 38, 1], [467, 25, 1], [472, 24, 0],
  [480, 15, 1], [502, 17, 1], [506, 36, 1], [510, 20, 0], [535, 22, 0], [574, 26, 0], [586, 30, 1], [595, 34, 0], [600, 57, 0],
  [604, 42, 1], [608, 121, 1], [612, 33, 1], [616, 56, 0], [620, 52, 0], [625, 80, 0], [629, 64, 1], [633, 33, 1], [637, 31, 1],
  [642, 21, 0], [646, 28, 1], [659, 23, 1], [663, 13, 1], [667, 39, 1], [672, 41, 0], [676, 21, 0], [693, 26, 0], [710, 22, 1],
  [714, 21, 0], [723, 24, 0], [727, 22, 0], [740, 18, 1], [748, 22, 0], [761, 25, 0], [765, 18, 0], [773, 41, 1], [777, 20, 1],
  [786, 25, 0], [803, 30, 1], [816, 22, 0], [824, 20, 1], [841, 27, 0], [846, 28, 1], [854, 28, 0], [863, 25, 0], [867, 20, 0],
  [884, 23, 1], [905, 6, 1], [909, 6, 0], [914, 7, 1], [918, 15, 1], [922, 7, 0], [926, 6, 1], [931, 4, 1], [948, 26, 1],
  [952, 35, 1], [956, 31, 1], [960, 55, 0], [965, 26, 1], [969, 20, 1], [977, 34, 1],
  [986, 24, 0], [1003, 28, 1], [1011, 33, 0], [1029, 20, 1], [1041, 40, 1], [1046, 18, 0], [1050, 17, 0], [1054, 41, 1],
  [1058, 16, 0], [1066, 62, 1], [1071, 79, 1], [1075, 58, 0], [1079, 25, 1], [1083, 59, 0], [1088, 18, 1], [1092, 31, 0],
  [1118, 26, 0], [1122, 20, 0], [1126, 24, 0], [1130, 20, 0], [1134, 34, 0], [1143, 49, 0], [1147, 21, 1], [1152, 21, 1],
  [1156, 22, 1], [1160, 22, 0], [1168, 15, 1], [1177, 23, 0], [1228, 17, 1], [1232, 32, 1], [1236, 37, 1], [1241, 23, 1],
  [1245, 25, 0], [1262, 24, 0], [1271, 37, 0], [1275, 33, 0], [1279, 63, 0], [1283, 111, 0], [1288, 29, 0], [1292, 49, 0],
  [1296, 24, 1], [1300, 24, 0], [1304, 91, 0], [1309, 39, 0], [1313, 36, 1], [1317, 22, 0], [1321, 51, 0], [1326, 36, 0],
  [1330, 47, 1], [1334, 20, 0], [1339, 17, 1], [1343, 27, 1], [1347, 14, 0], [1356, 31, 0], [1364, 21, 1], [1368, 15, 1],
  [1373, 18, 1], [1377, 24, 1], [1381, 14, 0], [1449, 21, 0], [1453, 14, 0], [1457, 16, 0], [1462, 18, 0], [1466, 15, 0],
  [1483, 27, 0], [1573, 16, 0], [1649, 23, 0], [1743, 27, 0], [1747, 15, 0], [1751, 17, 0], [1755, 9, 1], [1759, 11, 1],
];

const BAR_STEP = 4.252;
const BARS = (() => {
  const known = new Map(VOLUME_PEAKS.map(([x, h, up]) => [Math.round((x - 80.4) / BAR_STEP), { h, up }]));
  return Array.from({ length: 396 }, (_, i) => {
    const seed = Math.abs(Math.sin(i * 12.9898) * 43758.5453) % 1;
    const base = i > 305 ? 3 + seed * 7 : 5 + seed * 13;
    const bar = known.get(i) || { h: base, up: Math.sin(i * 1.7) + seed > 0.6 };
    return { x: 80.4 + i * BAR_STEP, ...bar };
  });
})();

const TREND_LINES = [
  [78, 487, 1762, 309],
  [78, 577, 1762, 399],
  [235, 924, 1762, 762],
  [198, 229, 459, 925],
  [476, 925, 646, 448],
  [646, 448, 902, 841],
  [881, 836, 902, 841],
  [902, 841, 906, 818],
  [493, 229, 1216, 818],
  [551, 229, 1386, 803],
  [608, 429, 1629, 775],
];

const VLINES = [149, 302, 455, 608, 761, 914, 1067, 1220, 1373, 1526, 1679];
const HLINES = [279, 341, 404, 467, 530, 592, 655, 718, 780, 843, 906];

/* ---------- charts ---------- */

const PriceChart = () => (
  <PlotSvg viewBox="78 229 1684 695" preserveAspectRatio="none" role="img" aria-label="AVNTKRW 5분 차트">
    <polygon points={BB_FILL} fill="#2a7fff" fillOpacity="0.05" />
    <g stroke="#fff" strokeOpacity="0.08">
      {VLINES.map((x) => <path key={x} d={`M${x} 229V924`} />)}
      {HLINES.map((y) => <path key={y} d={`M78 ${y}H1762`} />)}
    </g>
    <g stroke="#fff" strokeWidth="3">
      {TREND_LINES.map(([x1, y1, x2, y2]) => (
        <line key={`${x1}-${y1}-${x2}`} x1={x1} y1={y1} x2={x2} y2={y2} />
      ))}
    </g>
    <g stroke="#f7e53b" strokeWidth="3">
      <line x1="352" y1="508" x2="1425" y2="508" />
      <line x1="394" y1="435" x2="1250" y2="643" />
    </g>
    <g fill="none" strokeWidth="4" strokeLinejoin="round">
      <polyline points={EMA[200]} stroke="#0404a6" />
      <polyline points={EMA[20]} stroke="#a01015" />
    </g>
    {CANDLES.map((c) => (
      <g key={c.x} fill={c.up ? '#4caf50' : '#ea3a4a'}>
        <rect x={c.x} y={c.high} width="1.3" height={c.low - c.high} opacity="0.85" />
        <rect x={c.x - 1.5} y={c.top} width="4.2" height={Math.max(2, c.bottom - c.top)} />
      </g>
    ))}
    <g fill="none" strokeWidth="4" strokeLinejoin="round">
      <polyline points={EMA[100]} stroke="#14a3a3" />
      <polyline points="78,250 90,229" stroke="#a39a3a" />
      <polyline points={EMA[50]} stroke="#a39a3a" />
    </g>
    <g fill="none" strokeLinecap="round" strokeLinejoin="round">
      <polyline points={BB_BASIS} stroke="#3664dc" strokeWidth="2.5" strokeDasharray="4 6" />
      <polyline points={BB_UPPER} stroke="#e83a4b" strokeWidth="4" strokeDasharray="6 9" />
      <polyline points={BB_LOWER_START} stroke="#12957f" strokeWidth="4" strokeDasharray="6 9" />
      <polyline points={BB_LOWER_REST} stroke="#12957f" strokeWidth="4" strokeDasharray="6 9" />
    </g>
    <rect x="659" y="695" width="21" height="72" fill="#00bcd4" fillOpacity="0.25" />
    <rect x="659" y="767" width="21" height="111" fill="#f23645" fillOpacity="0.2" />
    <path d="M659 767H680" stroke="#9a9a9a" />
    <rect x="743" y="453" width="429" height="53" fill="#00bcd4" fillOpacity="0.32" />
    <rect x="743" y="507" width="429" height="346" fill="#f23645" fillOpacity="0.19" />
    <path d="M743 505.5H1172" stroke="#8f8f8f" />
    <path d="M743 506L1055 455M1046 453l9 2-6 7" stroke="#8f8a84" fill="none" strokeDasharray="8 7" />
    <path d="M78 692.5H1762" stroke="#5fae63" strokeDasharray="1.5 3" />
    <path d="M78 551.5H1740M1172.5 229V924" stroke="#b4b4b4" strokeDasharray="8 8" />
    <g fill="#000" stroke="#2349b5" strokeWidth="2">
      <rect x="736" y="446" width="15" height="15" rx="4" />
      <circle cx="743.5" cy="506" r="7.5" />
      <rect x="736" y="845" width="15" height="15" rx="4" />
      <rect x="1165" y="498" width="15" height="15" rx="4" />
    </g>
  </PlotSvg>
);

const VolumeChart = () => (
  <PlotSvg viewBox="78 925 1684 134" preserveAspectRatio="none" role="img" aria-label="볼륨">
    <g stroke="#151515">
      {VLINES.map((x) => <path key={x} d={`M${x} 925V1059`} />)}
      <path d="M78 949.5H1762M78 1004.5H1762" />
    </g>
    {BARS.map((b) => (
      <rect key={b.x} x={b.x - 1} y={1059 - b.h} width="3" height={b.h} fill={b.up ? '#1b5a50' : '#7b2f30'} />
    ))}
    <path d="M1172.5 925V1059" stroke="#b4b4b4" strokeDasharray="8 8" />
  </PlotSvg>
);

/* ---------- sections ---------- */

const BOOKMARKS = [
  { label: 'NS', latin: true, icon: <Favicon $bg="#3182f6" $radius="50%" $italic>S</Favicon> },
  { label: 'gpt', latin: true, icon: <AiOutlineOpenAI size={22} color="#111" /> },
  {
    label: 'Gemini',
    latin: true,
    icon: (
      <svg width="22" height="22" viewBox="0 0 22 22" aria-hidden="true">
        <defs>
          <linearGradient id="gem" x1="0" y1="0.6" x2="1" y2="0.5">
            <stop offset="0" stopColor="#fbbc04" />
            <stop offset="0.3" stopColor="#34a853" />
            <stop offset="0.5" stopColor="#4285f4" />
            <stop offset="1" stopColor="#3f7df0" />
          </linearGradient>
        </defs>
        <path d="M11 0c1 7 4 10 11 11-7 1-10 4-11 11-1-7-4-10-11-11 7-1 10-4 11-11z" fill="url(#gem)" />
        <path d="M11 0c1 5 2.5 8 5 9.5L11 11 7 8c2-1 3.5-4 4-8z" fill="#ea4335" opacity="0.8" />
      </svg>
    ),
  },
  { label: 'NN', latin: true, icon: <Favicon $bg="#0ccb62">N</Favicon> },
  { label: '보라', icon: <Favicon $bg="linear-gradient(90deg, #6bbf45, #2ba7e0)" $radius="50%">B</Favicon> },
  {
    label: '부갤',
    icon: (
      <Favicon $bg="#3b4890" $radius="4px">
        <svg width="17" height="17" viewBox="0 0 17 17" fill="none" stroke="#fff" strokeWidth="2.5" aria-hidden="true">
          <path d="M3 2v7c0 3 4 4 5 1V2M1 5h4M16 6c-3-2-6 0-6 2.5S13 13 16 10M8 10v6" />
        </svg>
      </Favicon>
    ),
  },
  {
    label: 'U',
    latin: true,
    icon: (
      <svg width="23" height="17" viewBox="0 0 23 17" aria-hidden="true">
        <rect width="23" height="16" rx="4" fill="#ff0033" />
        <path d="M9 5l6 3-6 3.5z" fill="#fff" />
      </svg>
    ),
  },
  {
    label: '☆',
    latin: true,
    icon: (
      <Favicon $bg="linear-gradient(20deg, #ffc83d, #ff4a3d 35%, #e416a5 65%, #6a26ff)" $radius="6px">
        <FaInstagram size={17} />
      </Favicon>
    ),
  },
  {
    label: '보사',
    icon: (
      <Favicon $bg="#34a853" $radius="3px">
        <svg width="19" height="19" viewBox="0 0 19 19" aria-hidden="true">
          <path d="M8 0v19M1 8h17" stroke="#fff" strokeWidth="3" />
        </svg>
      </Favicon>
    ),
  },
  { label: '아컴', icon: <Cup /> },
  { label: '네부', icon: <Favicon $bg="#03c73c"><House /></Favicon> },
  {
    label: '호갱',
    icon: (
      <Favicon $bg="#584de4" $radius="2px">
        <svg width="19" height="19" viewBox="0 0 19 19" fill="none" stroke="#fff" strokeWidth="1.5" aria-hidden="true">
          <path d="M1 7l8.5-5L18 7M3 6v11M16 6v11M7 8h5M6 11h7M9.5 6v2" />
          <circle cx="9.5" cy="14" r="2" />
        </svg>
      </Favicon>
    ),
  },
  { label: 'ㅂㄷㅅ', icon: <MdOutlineFolder size={26} /> },
  { label: 'n부', icon: <Favicon $bg="#03c73c"><House /></Favicon> },
  {
    label: '청약홈',
    icon: (
      <svg width="23" height="23" viewBox="0 0 23 23" fill="none" strokeWidth="6" aria-hidden="true">
        <path d="M17 4.5A8.5 8.5 0 0116 18" stroke="#12336d" />
        <path d="M16 18A8.5 8.5 0 015 17" stroke="#1aa0cf" />
        <path d="M6 18A8.5 8.5 0 017 5" stroke="#1c5da8" />
        <path d="M7 5a8.5 8.5 0 0110 0" stroke="#4cc3e6" />
      </svg>
    ),
  },
  { label: '지정모', icon: <Cup /> },
  { label: '부동산매물용', icon: <Cup /> },
];

const Browser = () => {
  const [url, setUrl] = useState('kr.tradingview.com/chart/u7R6eS9s/');

  return (
    <BrowserFrame>
      <TabStrip>
        <TabSearch aria-label="탭 검색">
          <ChevronDown size={17} strokeWidth={3} />
        </TabSearch>
        <Tab>
          <Favicon $bg="#fff" $color="#0b3a94">D</Favicon>
          <TabTitle>[30일 챌린지 17기 4주차]</TabTitle>
          <PlainButton $w={18} aria-label="탭 닫기">
            <X size={17} strokeWidth={2.5} />
          </PlainButton>
        </Tab>
        <Tab $active>
          <Favicon $bg="#131722" $radius="5px">
            <TvMark width={19} height={15} />
          </Favicon>
          <TabTitle>AVNTKRW 1,674.0 ▲ +4.43% 기본</TabTitle>
          <PlainButton $w={20} aria-label="탭 닫기">
            <X size={17} strokeWidth={2.5} />
          </PlainButton>
        </Tab>
        <PlainButton $w={56} aria-label="새 탭">
          <Plus size={20} />
        </PlainButton>
        <WindowControls>
          <PlainButton aria-label="최소화">
            <Minus size={18} />
          </PlainButton>
          <PlainButton aria-label="이전 크기로">
            <svg width="16" height="16" viewBox="0 0 16 16" fill="none" stroke="currentColor" strokeWidth="1.5">
              <rect x="1.5" y="4" width="10" height="10" rx="2" />
              <path d="M4 2h7.5A2.5 2.5 0 0114 4.5V12" />
            </svg>
          </PlainButton>
          <PlainButton aria-label="닫기">
            <X size={20} strokeWidth={1.5} />
          </PlainButton>
        </WindowControls>
      </TabStrip>

      <AddressRow>
        <NavButtons>
          <PlainButton $w={30} aria-label="뒤로"><MdArrowBack size={25} /></PlainButton>
          <PlainButton $w={30} aria-label="앞으로"><MdArrowForward size={25} /></PlainButton>
          <PlainButton $w={30} aria-label="새로고침"><MdRefresh size={26} /></PlainButton>
          <PlainButton $w={30} aria-label="홈"><MdOutlineHome size={26} /></PlainButton>
        </NavButtons>
        <Omnibox>
          <SiteInfo>
            <svg width="18" height="18" viewBox="0 0 18 18" fill="none" stroke="#1d1b20" strokeWidth="2">
              <circle cx="4" cy="4.5" r="2.5" />
              <path d="M9.5 4.5H17M1 13.5h7.5" />
              <circle cx="14" cy="13.5" r="2.5" />
            </svg>
          </SiteInfo>
          <UrlInput aria-label="주소창" value={url} onChange={(e) => setUrl(e.target.value)} />
          <Cluster $gap={19}>
            <MdOutlineVisibilityOff size={26} />
            <MdStarBorder size={26} />
          </Cluster>
        </Omnibox>
        <BrowserActions>
          <ExBadge>EX</ExBadge>
          <MdOutlineExtension size={26} />
          <SoftDivider />
          <ProfileBadge aria-label="프로필">훈</ProfileBadge>
          <PlainButton $w={22} aria-label="메뉴"><MdMoreVert size={26} /></PlainButton>
        </BrowserActions>
      </AddressRow>

      <BookmarkBar>
        <BookmarkLead>
          <PlainButton aria-label="앱">
            <svg width="20" height="20" viewBox="0 0 20 20" fill="none" stroke="currentColor" strokeWidth="2">
              <path d="M1 1h7v7H1zM12 1h7v7h-7zM1 12h7v7H1zM12 12h7v7h-7z" />
            </svg>
          </PlainButton>
          <SoftDivider />
        </BookmarkLead>
        {BOOKMARKS.map((b) => (
          <Bookmark key={b.label} href="#" $latin={b.latin}>
            {b.icon}
            {b.label}
          </Bookmark>
        ))}
        <BookmarkTail>
          <MdKeyboardDoubleArrowRight size={24} />
          <SoftDivider />
          <Bookmark href="#">
            <MdOutlineFolder size={26} />
            모든 북마크
          </Bookmark>
        </BookmarkTail>
      </BookmarkBar>
    </BrowserFrame>
  );
};

const INTERVALS = [
  ['5분', 38],
  ['15분', 46],
  ['1시간', 54],
  ['4시간', 54],
  ['날', 26],
  ['주', 26],
];

const AppToolbar = () => {
  const [interval, setInterval] = useState('5분');

  return (
    <TopBar>
      <Avatar aria-label="메뉴 열기">
        M<Notice>4</Notice>
      </Avatar>
      <SymbolButton>
        <Icon name="search" sw={1.6} />
        AVNTKRW
      </SymbolButton>
      <IconButton aria-label="심볼 비교"><Icon name="plusCircle" /></IconButton>
      <BarDivider />
      <Intervals>
        {INTERVALS.map(([label, w]) => (
          <IntervalButton key={label} $w={w} $active={label === interval} onClick={() => setInterval(label)}>
            {label}
          </IntervalButton>
        ))}
        <PlainButton $w={20} aria-label="차트 간격"><Icon name="caret" size={30} sw={1.6} /></PlainButton>
      </Intervals>
      <BarDivider />
      <IconButton aria-label="캔들"><Icon name="candles" /></IconButton>
      <BarDivider />
      <LabelButton><Icon name="indicators" size={32} />지표</LabelButton>
      <PlainButton $w={56} aria-label="지표 템플릿"><Icon name="caret" size={30} sw={1.6} /></PlainButton>
      <IconButton aria-label="레이아웃"><Icon name="layoutGrid" size={30} /></IconButton>
      <BarDivider />
      <Cluster $gap={25}>
        <LabelButton><Icon name="alert" size={32} />얼러트</LabelButton>
        <LabelButton><Icon name="replay" size={32} />리플레이</LabelButton>
      </Cluster>
      <BarDivider $wide />
      <Cluster $gap={19}>
        <IconButton aria-label="실행취소"><Icon name="undo" /></IconButton>
        <IconButton aria-label="다시 실행" $dim><Icon name="redo" /></IconButton>
      </Cluster>
      <RightTools>
        <IconButton aria-label="레이아웃 선택"><Icon name="square" size={36} /></IconButton>
        <LayoutName>
          기본
          <small>저장</small>
        </LayoutName>
        <PlainButton $w={20} aria-label="레이아웃 관리"><Icon name="caret" size={30} sw={1.6} /></PlainButton>
        <BarDivider />
        <Cluster $gap={19}>
          <IconButton aria-label="빠른 검색"><Icon name="quick" /></IconButton>
          <IconButton aria-label="설정"><Icon name="hexGear" size={38} /></IconButton>
          <IconButton aria-label="전체화면"><Icon name="fullscreen" size={38} /></IconButton>
          <IconButton aria-label="스냅샷"><Icon name="camera" size={38} /></IconButton>
        </Cluster>
        <PublishButton>퍼블리쉬</PublishButton>
      </RightTools>
    </TopBar>
  );
};

const DrawingBar = () => (
  <SideBar>
    <ToolButton aria-label="십자선">
      <ActiveTool><Icon name="cross" /></ActiveTool>
    </ToolButton>
    {['trend', 'fib', 'xabcd', 'forecast', 'brush', 'text', 'heart'].map((name) => (
      <ToolButton key={name} aria-label={name}><Icon name={name} /></ToolButton>
    ))}
    <ToolDivider />
    <ToolButton aria-label="측정"><Icon name="ruler" /></ToolButton>
    <ToolButton aria-label="확대"><Icon name="zoom" /></ToolButton>
    <ToolDivider />
    {['magnet', 'lockDraw', 'lock', 'eye'].map((name) => (
      <ToolButton key={name} aria-label={name}><Icon name={name} /></ToolButton>
    ))}
    <ToolDivider />
    <ToolButton aria-label="삭제"><Icon name="trash" /></ToolButton>
    <FavoriteButton aria-label="즐겨찾기 툴바"><Icon name="star" /></FavoriteButton>
  </SideBar>
);

const WidgetBar = () => (
  <SideBar $right>
    {['watchlist', 'clock', 'layers', 'chat'].map((name) => (
      <ToolButton key={name} $h={64} aria-label={name}><Icon name={name} size={38} /></ToolButton>
    ))}
    <Spacer />
    <ToolButton $h={64} aria-label="스크리너"><Icon name="target" size={42} /></ToolButton>
    <ToolButton $h={64} aria-label="캘린더"><Icon name="calendar" size={42} /></ToolButton>
    <AppsButton aria-label="더보기">
      <svg width="26" height="26" viewBox="0 0 26 26" fill="currentColor">
        {[0, 1, 2].map((r) => [0, 1, 2].map((c) => (
          <rect key={`${r}${c}`} x={c * 10} y={r * 10} width="6" height="6" rx="2" />
        )))}
      </svg>
    </AppsButton>
    <ToolDivider $tight />
    <ToolButton $h={64} aria-label="스트림"><Icon name="rss" size={38} /></ToolButton>
    <ToolButton $h={64} aria-label="도움말"><Icon name="help" size={42} /></ToolButton>
  </SideBar>
);

// price labels share one scale with the ticks column, which runs from 276 to 881
const tickTop = (y) => ({ top: `${((y - 276) / 605) * 100}%` });
const plotAt = (x, y) => ({ left: `${((x - 78) / 1684) * 100}%`, top: `${((y - 229) / 695) * 100}%` });
const timeAt = (x) => ({ left: `${((x - 78) / 1684) * 100}%` });

const PRICES = [1740, 1730, 1720, 1710, 1700, 1690, 1680, 1660, 1650];
const priceToY = (price) => 341 + (1730 - price) * 6.283;

const TIMES = ['2', '03:00', '06:00', '09:00', '12:00', '15:00', '18:00', '', '3', '03:00', '06:00'];

const Chart = () => (
  <ChartCard>
    <Pane>
      <Plot>
        <PriceChart />
        <PositionTag style={plotAt(958, 439)} $bg="#00bcd8" $c="#4461c9">타겟: 8.2 (0.48%) 82, 금액: 1037.07</PositionTag>
        <PositionTag style={plotAt(958, 505)} $bg="#00bcd8" $c="#4461c9" $border="#fff">
          포지션청산 손익: 8.2, 수량: 4.521
          <br />
          위험/보상율: 0.15
        </PositionTag>
        <PositionTag style={plotAt(958, 866)} $bg="#f23645" $c="#8a2da0">스탑: 55.3 (3.25%) 553, 금액: 750</PositionTag>
        <Legend>
          <LegendRow $h={30} $gap={7}>
            <SymbolTitle>Avantis / KRW · 5 · UpBit</SymbolTitle>
            <MarketDot />
            <Ohlc>시<Value $c="#f23645">1,679.0</Value></Ohlc>
            <Ohlc>고<Value $c="#f23645">1,680.0</Value></Ohlc>
            <Ohlc>저<Value $c="#f23645">1,673.0</Value></Ohlc>
            <Ohlc>종<Value $c="#f23645">1,674.0</Value></Ohlc>
            <Ohlc $change><Value $c="#f23645">−5.0 (−0.30%)</Value></Ohlc>
          </LegendRow>
          <LegendRow $h={35}>
            <span>BB <Value $c="#8c8c8c">20 SMA close 2</Value></span>
            <Value $c="#2f62e8">1,684.8</Value>
            <Value $c="#e83a4b">1,711.5</Value>
            <Value $c="#12957f">1,658.0</Value>
          </LegendRow>
          <LegendRow $h={33} $gap={14}>
            <span>EMA 20/50/100/200</span>
            <Value $c="#d01218">1,683.3</Value>
            <Value $c="#ffeb3b">1,686.5</Value>
            <Value $c="#1fe0e0">1,685.1</Value>
            <Value $c="#0a0ad0">1,688.5</Value>
          </LegendRow>
          <CollapseButton aria-label="접기"><Icon name="caretUp" size={22} sw={2} /></CollapseButton>
        </Legend>
        <FloatingTools>
          <Grip />
          <IconButton aria-label="추세선"><Icon name="trend" size={32} /></IconButton>
          <IconButton aria-label="피보나치"><Icon name="fib" /></IconButton>
          <IconButton aria-label="패턴"><Icon name="pattern" /></IconButton>
          <IconButton aria-label="엘리엇 임펄스"><Wave from="1" to="5" /></IconButton>
          <IconButton aria-label="엘리엇 조정"><Wave from="A" to="C" /></IconButton>
          <IconButton aria-label="매수 포지션"><Icon name="longPos" /></IconButton>
          <IconButton aria-label="매도 포지션"><Icon name="shortPos" /></IconButton>
          <IconButton aria-label="네모"><Icon name="rect" /></IconButton>
          <IconButton aria-label="가격 범위"><Icon name="range" /></IconButton>
          <IconButton aria-label="경로"><Icon name="zigzag" /></IconButton>
          <IconButton aria-label="채널"><Icon name="channel" /></IconButton>
        </FloatingTools>
        <AddAtPrice style={{ top: plotAt(0, 552).top }} aria-label="이 가격에 추가">
          <Icon name="plusSmall" size={32} sw={1.4} />
        </AddAtPrice>
      </Plot>
      <Axis>
        <SelectBox>
          <CurrencySelect aria-label="통화" defaultValue="KRW">
            <option>KRW</option>
            <option>USD</option>
          </CurrencySelect>
          <ChevronDown size={12} color="#dbdbdb" strokeWidth={3} />
        </SelectBox>
        <Ticks>
          {PRICES.map((p) => (
            <Tick key={p} style={tickTop(priceToY(p))}>{`${p.toLocaleString('en-US')}.0`}</Tick>
          ))}
          <PriceTag style={tickTop(453)} $bg="#00bcd8" $c="#0f0f0f">1,712.1</PriceTag>
          <PriceTag style={tickTop(505)} $bg="#808080">1,703.9</PriceTag>
          <PriceTag style={tickTop(552)} $bg="#3c3c3c" $pad={5}>1,696.5</PriceTag>
          <PriceTag style={tickTop(736)} $bg="#00bcd8" $c="#0f0f0f">1,673.6</PriceTag>
          <PriceTag style={tickTop(702)} $bg="#4caf50">
            1,674.0
            <small>03:57</small>
          </PriceTag>
          <PriceTag style={tickTop(766)} $bg="#808080">1,662.3</PriceTag>
          <PriceTag style={tickTop(852)} $bg="#f23645">1,648.6</PriceTag>
          <PriceTag style={tickTop(879)} $bg="#f23645">1,644.4</PriceTag>
        </Ticks>
        <ScaleButtons $h={43}>
          <ScaleButton>A</ScaleButton>
          <ScaleButton>L</ScaleButton>
        </ScaleButtons>
      </Axis>
    </Pane>
    <Pane $fixed={135} $line>
      <Plot>
        <VolumeChart />
        <Legend $large>
          <LegendRow $h={31} $gap={11}>
            <span>볼륨 · AVNT</span>
            <Value $c="#ef5350">{'42.53\u2009K'}</Value>
          </LegendRow>
        </Legend>
        <Watermark>
          <TvMark />
          TradingView
        </Watermark>
      </Plot>
      <Axis>
        <Ticks>
          <Tick style={{ top: `${(25 / 92) * 100}%` }}>{'800\u2009K'}</Tick>
          <Tick style={{ top: `${(80 / 92) * 100}%` }}>{'400\u2009K'}</Tick>
        </Ticks>
        <ScaleButtons $h={42}>
          <ScaleButton $on>A</ScaleButton>
          <ScaleButton>L</ScaleButton>
        </ScaleButtons>
      </Axis>
    </Pane>
    <TimeAxis>
      <TimeScale>
        {TIMES.map((label, i) => (
          <TimeLabel key={VLINES[i]} $bold={label.length === 1} style={timeAt(VLINES[i])}>{label}</TimeLabel>
        ))}
        <TimeTag style={timeAt(1172)}>목 2025-10-02   20:05</TimeTag>
      </TimeScale>
      <AxisSettings aria-label="축 설정"><Icon name="smallHex" /></AxisSettings>
    </TimeAxis>
  </ChartCard>
);

const App = () => (
  <Page>
    <GlobalStyle />
    <Browser />
    <AppToolbar />
    <Workspace>
      <DrawingBar />
      <Center>
        <Chart />
        <RangeBar>
          <RangeButton>1D</RangeButton>
          <RangeButton>5D</RangeButton>
          <RangeButton $all>전체</RangeButton>
          <RangeDivider />
          <IconButton aria-label="날짜로 가기"><Icon name="goto" size={32} /></IconButton>
          <Clock>20:36:02 UTC+9</Clock>
        </RangeBar>
        <PanelTabs>
          <button>Pine 에디터</button>
          <button>트레이딩패널</button>
          <RightTools $gap={16}>
            <IconButton aria-label="패널 열기"><Icon name="bigUp" /></IconButton>
            <IconButton aria-label="패널 최대화"><Icon name="expand" /></IconButton>
          </RightTools>
        </PanelTabs>
      </Center>
      <WidgetBar />
    </Workspace>
  </Page>
);

export default App;
